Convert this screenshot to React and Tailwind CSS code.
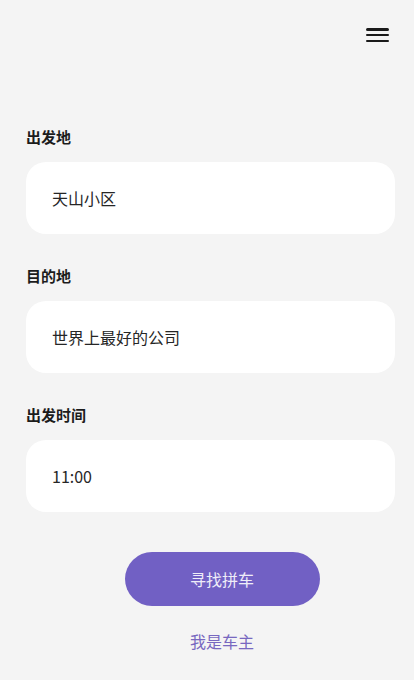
import React from 'react';

const FONT = { fontFamily: '"Noto Sans CJK SC", "Noto Sans", sans-serif' };

function Field({ label, value, last }) {
  return (
    <div className={last ? '' : 'mb-[32px]'}>
      <div className="h-[20px] text-[15px] leading-[20px] font-bold text-[#1c1c1c]">{label}</div>
      <div className="mt-[15px] flex h-[72px] items-center rounded-[20px] bg-white pl-[26px] text-[16px] text-[#262626]">
        {value}
      </div>
    </div>
  );
}

export default function App() {
  return (
    <div className="min-h-[680px] w-full bg-[#f4f4f4]" style={FONT}>
      {/* top bar */}
      <div className="flex justify-end pr-[25px] pt-[28px]">
        <div className="flex h-[14px] w-[23px] flex-col justify-between">
          <span className="h-[2.5px] rounded-full bg-[#1a1a1a]" />
          <span className="h-[2.5px] rounded-full bg-[#1a1a1a]" />
          <span className="h-[2.5px] rounded-full bg-[#1a1a1a]" />
        </div>
      </div>

      <div className="mt-[85px] pl-[26px] pr-[19px]">
        <Field label="出发地" value="天山小区" />
        <Field label="目的地" value="世界上最好的公司" />
        <Field label="出发时间" value="11:00" last />
      </div>

      <div className="mt-[40px] flex flex-col items-center pl-[30px]">
        <button className="h-[54px] w-[195px] rounded-full bg-[#7160c4] text-[16px] text-[#efedf8]">寻找拼车</button>
        <div className="mt-[25px] h-[20px] text-[16px] leading-[20px] text-[#7868c0]">我是车主</div>
      </div>
    </div>
  );
}
